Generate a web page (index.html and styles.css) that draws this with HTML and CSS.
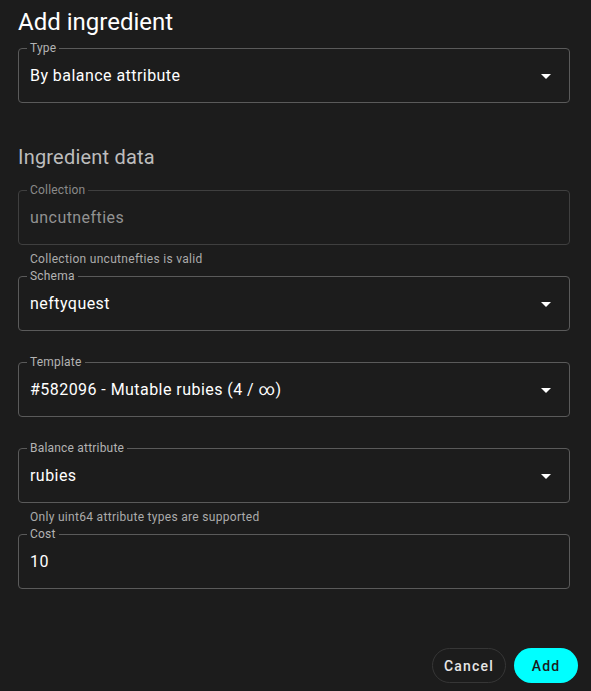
FILE: index.html
```html
<!DOCTYPE html>
<html lang="en">
<head>
<meta charset="utf-8">
<title>Add ingredient</title>
<link rel="stylesheet" href="styles.css">
</head>
<body>
<div class="dialog">
  <h2 class="title">Add ingredient</h2>

  <div class="group">
    <div class="field select">
      <span class="label">Type</span>
      <span class="value">By balance attribute</span>
      <svg class="arrow" viewBox="0 0 24 24" width="24" height="24"><path d="M7 10l5 5 5-5z"/></svg>
    </div>
    <div class="helper"></div>
  </div>

  <h3 class="section">Ingredient data</h3>

  <div class="group">
    <div class="field disabled">
      <span class="label">Collection</span>
      <span class="value">uncutnefties</span>
    </div>
    <div class="helper">Collection uncutnefties is valid</div>
  </div>

  <div class="group">
    <div class="field select">
      <span class="label">Schema</span>
      <span class="value">neftyquest</span>
      <svg class="arrow" viewBox="0 0 24 24" width="24" height="24"><path d="M7 10l5 5 5-5z"/></svg>
    </div>
    <div class="helper"></div>
  </div>

  <div class="group">
    <div class="field select">
      <span class="label">Template</span>
      <span class="value">#582096 - Mutable rubies (4 / ∞)</span>
      <svg class="arrow" viewBox="0 0 24 24" width="24" height="24"><path d="M7 10l5 5 5-5z"/></svg>
    </div>
    <div class="helper"></div>
  </div>

  <div class="group">
    <div class="field select">
      <span class="label">Balance attribute</span>
      <span class="value">rubies</span>
      <svg class="arrow" viewBox="0 0 24 24" width="24" height="24"><path d="M7 10l5 5 5-5z"/></svg>
    </div>
    <div class="helper">Only uint64 attribute types are supported</div>
  </div>

  <div class="group">
    <div class="field">
      <span class="label">Cost</span>
      <span class="value">10</span>
    </div>
    <div class="helper"></div>
  </div>

  <div class="actions">
    <button class="btn btn-outline">Cancel</button>
    <button class="btn btn-primary">Add</button>
  </div>
</div>
</body>
</html>
```
FILE: styles.css
```css
html, body {
  margin: 0;
  padding: 0;
  background: #1c1c1c;
}
body {
  font-family: Roboto, "Liberation Sans", sans-serif;
  color: #fff;
}
.dialog {
  padding: 6px 21px 0 18px;
}
.title {
  margin: 0 0 10px 0;
  font-size: 24px;
  line-height: 32px;
  font-weight: 400;
  color: #fff;
}
.section {
  margin: 17px 0 19px 0;
  font-size: 20px;
  line-height: 28px;
  font-weight: 400;
  letter-spacing: 0.2px;
  color: #bdbdbd;
}
.group {
  margin-bottom: 8px;
}
.field {
  position: relative;
  box-sizing: border-box;
  height: 55px;
  border: 1px solid #5a5a5a;
  border-radius: 4px;
  display: flex;
  align-items: center;
  padding: 0 11px 0 11px;
}
.label {
  position: absolute;
  top: -7px;
  left: 8px;
  padding: 0 3px;
  background: #1c1c1c;
  font-size: 12px;
  line-height: 12px;
  letter-spacing: 0.2px;
  color: #b3b3b3;
}
.value {
  flex: 1;
  font-size: 16px;
  line-height: 20px;
  letter-spacing: 0.45px;
  color: #fff;
}
.arrow {
  fill: #fff;
  flex: none;
}
.disabled {
  border-color: #3f3f3f;
}
.disabled .label {
  color: #8a8a8a;
}
.disabled .value {
  color: #929292;
}
.helper {
  margin: 6px 0 0 12px;
  height: 17px;
  font-size: 12px;
  line-height: 17px;
  letter-spacing: 0.3px;
  color: #ababab;
}
.actions {
  display: flex;
  justify-content: flex-end;
  gap: 8px;
  margin-top: 36px;
  margin-right: -8px;
}
.btn {
  box-sizing: border-box;
  height: 35px;
  border-radius: 18px;
  font-family: inherit;
  font-size: 14px;
  font-weight: 500;
  letter-spacing: 1.2px;
  cursor: pointer;
}
.btn-outline {
  background: transparent;
  color: #e6e6e6;
  border: 1px solid #363636;
  padding: 0 11px;
}
.btn-primary {
  background: #00ffff;
  color: #1c1c1c;
  border: none;
  min-width: 64px;
  padding: 0 16px;
}
```
